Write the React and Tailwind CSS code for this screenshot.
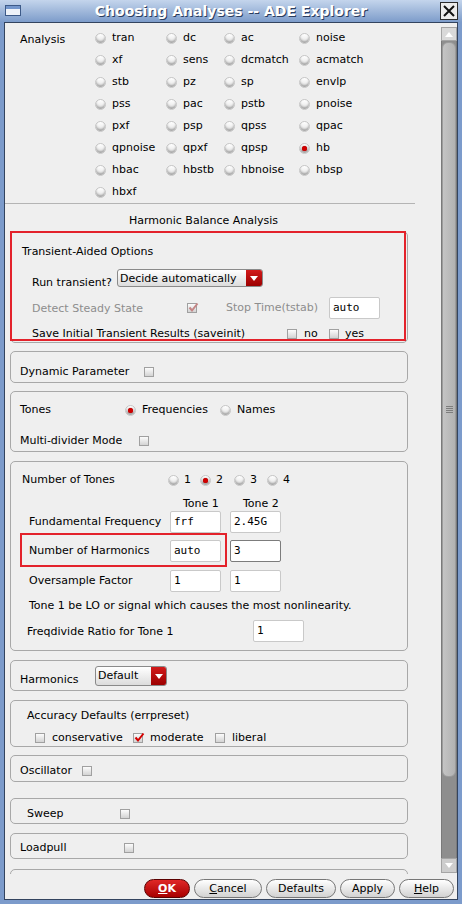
import React from 'react';

const analyses = [
  ['tran', 'dc', 'ac', 'noise'],
  ['xf', 'sens', 'dcmatch', 'acmatch'],
  ['stb', 'pz', 'sp', 'envlp'],
  ['pss', 'pac', 'pstb', 'pnoise'],
  ['pxf', 'psp', 'qpss', 'qpac'],
  ['qpnoise', 'qpxf', 'qpsp', 'hb'],
  ['hbac', 'hbstb', 'hbnoise', 'hbsp'],
  ['hbxf'],
];

function Radio({ on }) {
  return (
    <span className="inline-flex w-[11px] h-[11px] shrink-0 items-center justify-center rounded-full border border-[#c6c6c6] bg-[linear-gradient(#ffffff,#e2e2e2)] shadow-[inset_0_-2px_2px_#a8a8a8]">
      {on && <span className="w-[5px] h-[5px] rounded-full bg-[#d00000] shadow-[0_0_1px_#700000]" />}
    </span>
  );
}

function Check({ on, dim }) {
  return (
    <span className="relative inline-block w-[10px] h-[10px] shrink-0 border border-[#a0a0a0] bg-[linear-gradient(#fcfcfc,#d3d3d3)]">
      {on && (
        <svg className="absolute left-[0px] top-[-2px]" width="11" height="11" viewBox="0 0 11 11">
          <path d="M1.5 5.5 L4 8.5 L9.5 1.5" fill="none" stroke={dim ? '#c48585' : '#d30000'} strokeWidth="2" />
        </svg>
      )}
    </span>
  );
}

function Field({ v, dark }) {
  return (
    <span
      className={`flex items-center w-[51px] h-[22px] shrink-0 rounded-[2px] bg-white pl-[3px] font-['DejaVu_Sans_Mono',monospace] text-[11px] border ${
        dark ? 'border-[#7c7c7c]' : 'border-[#c9c9c9]'
      }`}
    >
      {v}
    </span>
  );
}

function Arrow() {
  return (
    <svg width="8" height="5" viewBox="0 0 8 5">
      <path d="M0 0 H8 L4 5 Z" fill="#ffffff" />
    </svg>
  );
}

function Group({ className, children }) {
  return (
    <div className={`relative ml-[5px] w-[398px] shrink-0 rounded-[5px] border border-[#a8a8a8] ${className}`}>
      {children}
    </div>
  );
}

function Btn({ children, className }) {
  return (
    <span
      className={`flex items-center justify-center h-[19px] rounded-full border ${className}`}
    >
      {children}
    </span>
  );
}

export default function App() {
  return (
    <div className="w-[462px] h-[904px] flex flex-col overflow-hidden bg-[#7c9bcb] font-['DejaVu_Sans',sans-serif] text-[11px] leading-[14px] text-black">
      {/* Title bar */}
      <div className="relative flex h-[22px] shrink-0 items-center justify-center bg-[linear-gradient(#c4d5ec,#7d9cca)]">
        <span className="absolute left-[5px] top-[5px] w-[16px] h-[11px] border border-[#3d5a88] bg-[#eef2f8]">
          <span className="block h-[3px] bg-[#7396cc]" />
        </span>
        <span className="font-['DejaVu_Sans',sans-serif] font-bold text-[14px] text-white [text-shadow:1px_1px_0_#2b3d5e]">
          Choosing Analyses -- ADE Explorer
        </span>
        <span className="absolute right-[4px] top-[2px] flex w-[18px] h-[18px] items-center justify-center border border-[#2b2b2b] bg-[#ececec]">
          <svg width="12" height="12" viewBox="0 0 12 12">
            <path d="M1 1 L11 11 M11 1 L1 11" stroke="#111" strokeWidth="2" />
          </svg>
        </span>
      </div>

      {/* Panel */}
      <div className="flex flex-1 flex-col mx-[4px] mb-[4px] min-h-0 border border-[#33445f] bg-[#efefef]">
        <div className="flex h-[851px] shrink-0">
          {/* Scrolled content */}
          <div className="flex flex-col flex-1 overflow-hidden pt-[4px]">
            <div className="flex shrink-0">
              <div className="w-[90px] pl-[15px] pt-[6px]">Analysis</div>
              <div className="grid grid-cols-[71px_58px_75px_90px] auto-rows-[22px]">
                {analyses.flatMap((row, r) =>
                  row.map((name) => (
                    <div key={r + name} className="flex items-center gap-[6px]">
                      <Radio on={name === 'hb'} />
                      <span>{name}</span>
                    </div>
                  ))
                )}
              </div>
            </div>
            <div className="h-px w-[410px] shrink-0 bg-[#b4b4b4]" />
            <div className="mt-[10px] pl-[124px] shrink-0">Harmonic Balance Analysis</div>

            {/* Transient-aided */}
            <Group className="mt-[3px] h-[112px]">
              <div className="mt-[13px] ml-[11px]">Transient-Aided Options</div>
              <div className="mt-[10px] ml-[21px] flex">
                <span className="w-[85px] pt-[7px]">Run transient?</span>
                <span className="flex w-[146px] h-[18px] overflow-hidden rounded-[3px] border border-[#8a8a8a] bg-[linear-gradient(#ffffff,#dcdcdc)]">
                  <span className="flex-1 pl-[2px] leading-[17px]">Decide automatically</span>
                  <span className="flex w-[16px] items-center justify-center bg-[linear-gradient(#d21a1a,#9c0000)]">
                    <Arrow />
                  </span>
                </span>
              </div>
              <div className="mt-[7px] ml-[21px] flex h-[22px] items-center">
                <span className="w-[155px] pt-[1px] text-[#8d8d8d]">Detect Steady State</span>
                <Check on dim />
                <span className="ml-[29px] w-[103px] text-[#8d8d8d]">Stop Time(tstab)</span>
                <Field v="auto" />
              </div>
              <div className="mt-[8px] ml-[21px] flex h-[14px] items-center">
                <span className="w-[255px]">Save Initial Transient Results (saveinit)</span>
                <Check />
                <span className="ml-[7px] w-[25px]">no</span>
                <Check />
                <span className="ml-[6px]">yes</span>
              </div>
              <div className="pointer-events-none absolute left-[-1px] top-[-1px] w-[396px] h-[110px] border-2 border-[#e3222b]" />
            </Group>

            <Group className="mt-[8px] h-[32px]">
              <div className="mt-[13px] ml-[9px] flex items-center">
                <span className="w-[124px]">Dynamic Parameter</span>
                <Check />
              </div>
            </Group>

            <Group className="mt-[8px] h-[61px]">
              <div className="mt-[11px] ml-[9px] flex items-center">
                <span className="w-[105px]">Tones</span>
                <Radio on />
                <span className="ml-[6px] w-[78px]">Frequencies</span>
                <Radio />
                <span className="ml-[6px]">Names</span>
              </div>
              <div className="mt-[17px] ml-[9px] flex items-center">
                <span className="w-[119px]">Multi-divider Mode</span>
                <Check />
              </div>
            </Group>

            {/* Tones */}
            <Group className="mt-[9px] h-[190px]">
              <div className="mt-[11px] ml-[11px] flex items-center">
                <span className="w-[146px]">Number of Tones</span>
                {[['1', 32], ['2', 34], ['3', 33], ['4', 33]].map(([n, w]) => (
                  <span key={n} className={`flex items-center gap-[5px] ${w === 32 ? 'w-[32px]' : w === 34 ? 'w-[34px]' : 'w-[33px]'}`}>
                    <Radio on={n === '2'} />
                    <span>{n}</span>
                  </span>
                ))}
              </div>
              <div className="mt-[10px] ml-[172px] flex">
                <span className="w-[60px]">Tone 1</span>
                <span>Tone 2</span>
              </div>
              <div className="ml-[18px] flex h-[22px] items-center">
                <span className="w-[141px]">Fundamental Frequency</span>
                <Field v="frf" />
                <span className="ml-[9px]"><Field v="2.45G" /></span>
              </div>
              <div className="mt-[7px] ml-[18px] flex h-[22px] items-center">
                <span className="w-[141px]">Number of Harmonics</span>
                <Field v="auto" />
                <span className="ml-[9px]"><Field v="3" dark /></span>
              </div>
              <div className="mt-[8px] ml-[18px] flex h-[22px] items-center">
                <span className="w-[141px]">Oversample Factor</span>
                <Field v="1" />
                <span className="ml-[9px]"><Field v="1" /></span>
              </div>
              <div className="mt-[7px] ml-[18px]">Tone 1 be LO or signal which causes the most nonlinearity.</div>
              <div className="mt-[7px] ml-[16px] flex h-[22px] items-center">
                <span className="w-[226px] pt-[2px]">Freqdivide Ratio for Tone 1</span>
                <Field v="1" />
              </div>
              <div className="pointer-events-none absolute left-[9px] top-[71px] w-[207px] h-[34px] border-2 border-[#e3222b]" />
            </Group>

            <Group className="mt-[9px] h-[31px]">
              <div className="mt-[5px] ml-[9px] flex">
                <span className="w-[75px] pt-[7px]">Harmonics</span>
                <span className="flex w-[72px] h-[20px] overflow-hidden rounded-[3px] border border-[#8a8a8a] bg-[linear-gradient(#ffffff,#dcdcdc)]">
                  <span className="flex-1 pl-[2px] leading-[18px]">Default</span>
                  <span className="flex w-[15px] items-center justify-center bg-[linear-gradient(#d21a1a,#9c0000)]">
                    <Arrow />
                  </span>
                </span>
              </div>
            </Group>

            <Group className="mt-[9px] h-[47px]">
              <div className="mt-[8px] ml-[16px]">Accuracy Defaults (errpreset)</div>
              <div className="mt-[8px] ml-[24px] flex items-center">
                <Check />
                <span className="ml-[7px] w-[81px]">conservative</span>
                <Check on />
                <span className="ml-[7px] w-[65px]">moderate</span>
                <Check />
                <span className="ml-[7px]">liberal</span>
              </div>
            </Group>

            <Group className="mt-[8px] h-[27px]">
              <div className="mt-[8px] ml-[9px] flex items-center">
                <span className="w-[62px]">Oscillator</span>
                <Check />
              </div>
            </Group>

            <Group className="mt-[16px] h-[26px]">
              <div className="mt-[8px] ml-[16px] flex items-center">
                <span className="w-[93px]">Sweep</span>
                <Check />
              </div>
            </Group>

            <Group className="mt-[9px] h-[26px]">
              <div className="mt-[7px] ml-[9px] flex items-center">
                <span className="w-[104px]">Loadpull</span>
                <Check />
              </div>
            </Group>

            <Group className="mt-[10px] h-[30px]" />
          </div>

          {/* Scrollbar */}
          <div className="ml-[1px] flex w-[16px] shrink-0 flex-col pt-[4px] pb-[1px]">
            <div className="flex h-[14px] shrink-0 items-center justify-center border border-[#a5a5a5] bg-[#d9d9d9]">
              <svg width="8" height="5" viewBox="0 0 8 5"><path d="M4 0 L8 5 H0 Z" fill="#fff" /></svg>
            </div>
            <div className="flex flex-1 flex-col bg-[#8e8e8e] border-x border-[#7a7a7a]">
              <div className="mt-[1px] flex h-[735px] items-center justify-center rounded-[6px] border border-[#9c9c9c] bg-[linear-gradient(90deg,#c4c4c4,#b2b2b2)]">
                <div className="flex flex-col gap-[1px]">
                  {[0, 1, 2, 3].map((i) => (
                    <span key={i} className="block h-px w-[7px] bg-[#7d7d7d]" />
                  ))}
                </div>
              </div>
            </div>
            <div className="flex h-[15px] shrink-0 items-center justify-center border border-[#a5a5a5] bg-[#cdcdcd]">
              <Arrow />
            </div>
          </div>
        </div>

        {/* Buttons */}
        <div className="flex flex-1 items-start justify-end gap-[4px] pt-[5px] pr-[3px]">
          <Btn className="w-[46px] border-[#5a0000] bg-[linear-gradient(#e02828,#a80000)] font-bold text-white">
            <span className="underline">O</span>K
          </Btn>
          <Btn className="w-[68px] border-[#777] bg-[linear-gradient(#ffffff,#d2d2d2)]">
            <span className="underline">C</span>ancel
          </Btn>
          <Btn className="w-[70px] border-[#777] bg-[linear-gradient(#ffffff,#d2d2d2)]">Defaults</Btn>
          <Btn className="w-[55px] border-[#777] bg-[linear-gradient(#ffffff,#d2d2d2)]">Apply</Btn>
          <Btn className="w-[55px] border-[#777] bg-[linear-gradient(#ffffff,#d2d2d2)]">
            <span className="underline">H</span>elp
          </Btn>
        </div>
      </div>
    </div>
  );
}
